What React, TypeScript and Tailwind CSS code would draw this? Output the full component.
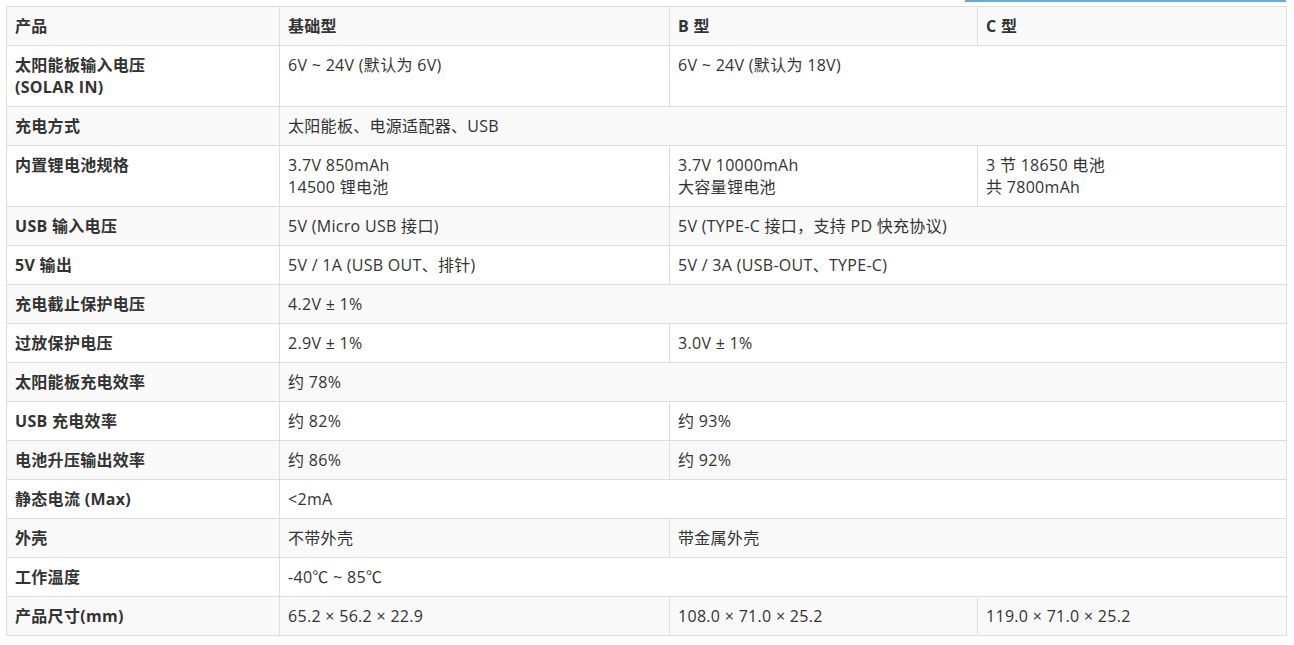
import React from 'react';

type Cell = { text: string[]; span?: number };
type Row = { label: string[]; cells: Cell[] };

const rows: Row[] = [
  { label: ['太阳能板输入电压', '(SOLAR IN)'], cells: [{ text: ['6V ~ 24V (默认为 6V)'] }, { text: ['6V ~ 24V (默认为 18V)'], span: 2 }] },
  { label: ['充电方式'], cells: [{ text: ['太阳能板、电源适配器、USB'], span: 3 }] },
  {
    label: ['内置锂电池规格'],
    cells: [
      { text: ['3.7V 850mAh', '14500 锂电池'] },
      { text: ['3.7V 10000mAh', '大容量锂电池'] },
      { text: ['3 节 18650 电池', '共 7800mAh'] },
    ],
  },
  { label: ['USB 输入电压'], cells: [{ text: ['5V (Micro USB 接口)'] }, { text: ['5V (TYPE-C 接口，支持 PD 快充协议)'], span: 2 }] },
  { label: ['5V 输出'], cells: [{ text: ['5V / 1A (USB OUT、排针)'] }, { text: ['5V / 3A (USB-OUT、TYPE-C)'], span: 2 }] },
  { label: ['充电截止保护电压'], cells: [{ text: ['4.2V ± 1%'], span: 3 }] },
  { label: ['过放保护电压'], cells: [{ text: ['2.9V ± 1%'] }, { text: ['3.0V ± 1%'], span: 2 }] },
  { label: ['太阳能板充电效率'], cells: [{ text: ['约 78%'], span: 3 }] },
  { label: ['USB 充电效率'], cells: [{ text: ['约 82%'] }, { text: ['约 93%'], span: 2 }] },
  { label: ['电池升压输出效率'], cells: [{ text: ['约 86%'] }, { text: ['约 92%'], span: 2 }] },
  { label: ['静态电流 (Max)'], cells: [{ text: ['<2mA'], span: 3 }] },
  { label: ['外壳'], cells: [{ text: ['不带外壳'] }, { text: ['带金属外壳'], span: 2 }] },
  { label: ['工作温度'], cells: [{ text: ['-40℃ ~ 85℃'], span: 3 }] },
  {
    label: ['产品尺寸(mm)'],
    cells: [{ text: ['65.2 × 56.2 × 22.9'] }, { text: ['108.0 × 71.0 × 25.2'] }, { text: ['119.0 × 71.0 × 25.2'] }],
  },
];

const cellCls = 'border border-[#dddddd] px-[8px] py-[8px] align-top leading-[22px]';

export default function App() {
  return (
    <div
      className="min-h-screen bg-white text-[16px] tracking-[0.3px] text-[#333333]"
      style={{ fontFamily: '"Open Sans", "Noto Sans CJK SC", sans-serif' }}
    >
      <div className="ml-[965px] h-[2px] w-[321px] bg-[#6aa6d6]" />
      <div className="pl-[6px] pt-[4px]">
        <table className="w-[1280px] table-fixed border-collapse">
          <colgroup>
            <col className="w-[273px]" />
            <col className="w-[390px]" />
            <col className="w-[308px]" />
            <col className="w-[309px]" />
          </colgroup>
          <thead>
            <tr className="bg-[#f9f9f9]">
              <th className={`${cellCls} text-left font-bold`}>产品</th>
              <th className={`${cellCls} text-left font-bold`}>基础型</th>
              <th className={`${cellCls} text-left font-bold`}>B 型</th>
              <th className={`${cellCls} text-left font-bold`}>C 型</th>
            </tr>
          </thead>
          <tbody>
            {rows.map((r, i) => (
              <tr key={i} className={i % 2 === 1 ? 'bg-[#f9f9f9]' : 'bg-white'}>
                <td className={`${cellCls} font-bold`}>
                  {r.label.map((l, j) => (
                    <div key={j}>{l}</div>
                  ))}
                </td>
                {r.cells.map((c, j) => (
                  <td key={j} colSpan={c.span ?? 1} className={cellCls}>
                    {c.text.map((t, k) => (
                      <div key={k}>{t}</div>
                    ))}
                  </td>
                ))}
              </tr>
            ))}
          </tbody>
        </table>
      </div>
    </div>
  );
}
